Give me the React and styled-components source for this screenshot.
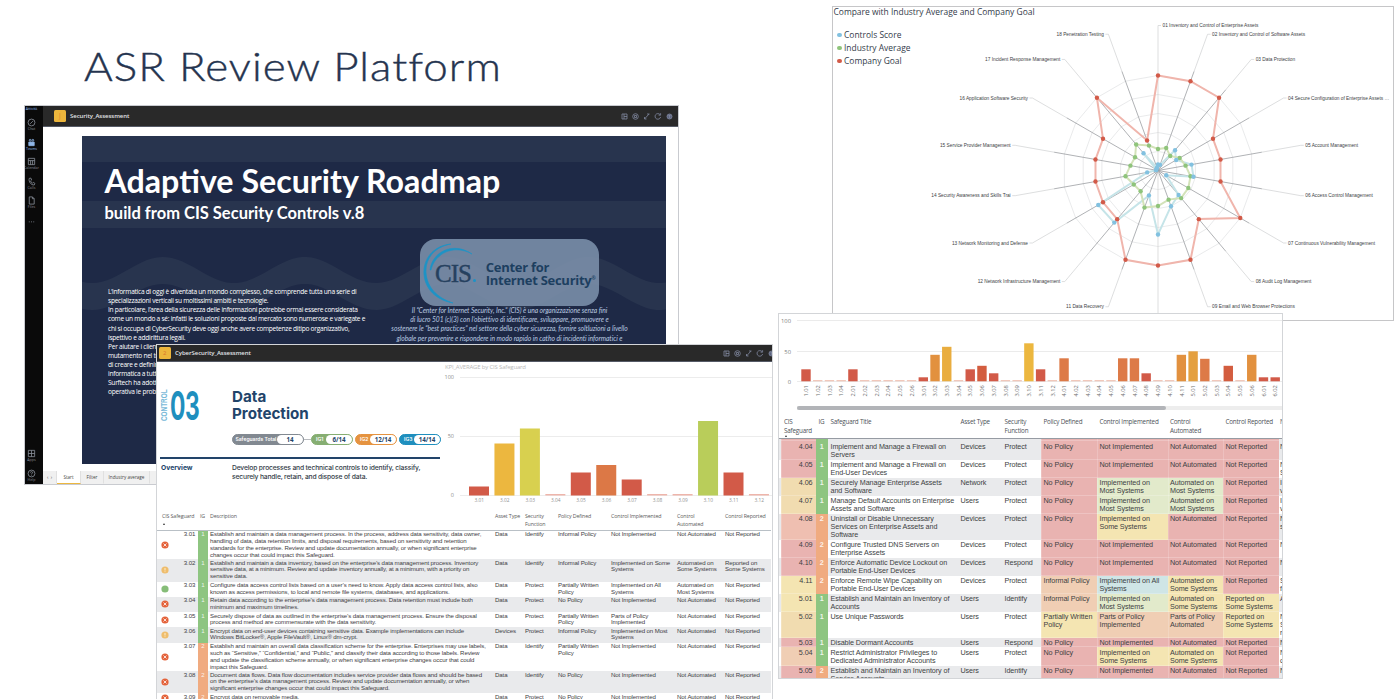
import React from "react";
import styled, { createGlobalStyle } from "styled-components";

const sans = `"Liberation Sans", Arial, sans-serif`;
const ui = `"Open Sans", "Noto Sans", sans-serif`;

const Global = createGlobalStyle`
  *, *::before, *::after { box-sizing: border-box; }
  body { margin: 0; background: #fff; overflow: hidden; }
`;

const Desktop = styled.main`
  position: relative;
  width: 1400px;
  height: 699px;
  overflow: hidden;
  background: #fff;
  font-family: ${sans};
`;

const PageTitle = styled.h1`
  display: inline-block;
  margin: 0;
  padding: 43px 0 0 84px;
  font: 300 39px/47px Lato, sans-serif;
  letter-spacing: 0.9px;
  color: #25344f;
  -webkit-text-stroke: 0.4px #25344f;
  white-space: nowrap;
  span {
    display: inline-block;
    transform: scaleX(1.127);
    transform-origin: left;
  }
`;

const Win = styled.section`
  position: absolute;
  left: ${(p) => p.$x}px;
  top: ${(p) => p.$y}px;
  width: ${(p) => p.$w}px;
  height: ${(p) => p.$h}px;
  overflow: hidden;
  background: #fff;
  border: 1px solid ${(p) => p.$edge || "#d3d5d8"};
`;

const TopBar = styled.header`
  display: flex;
  align-items: center;
  height: ${(p) => p.$h}px;
  padding-left: ${(p) => p.$left}px;
  background: #292929;
  border-bottom: 1px solid #555a66;
`;

const AppMark = styled.span`
  display: grid;
  place-items: center;
  width: 11.5px;
  height: 11.5px;
  border-radius: 1.5px;
  background: #edb63c;
  color: #d8752c;
  font: 6px/1 ${ui};
`;

const BarTitle = styled.span`
  margin-left: ${(p) => p.$ml}px;
  flex: 1;
  font: 600 6px/10px ${ui};
  letter-spacing: -0.06px;
  color: #e2e4e8;
`;

const Tools = styled.svg`
  width: 56px;
  height: 9px;
  margin-right: ${(p) => p.$mr}px;
  fill: none;
  stroke: #8088a0;
  stroke-width: 0.8;
`;

function BarTools({ mr }) {
  return (
    <Tools $mr={mr} viewBox="0 0 56 9">
      <path d="M3 2h5v5H3zM5 2v5M5 4.5h3" />
      <circle cx="16.500" cy="4.500" r="2.800" />
      <path d="M15.500 3.500h2v2h-2z" />
      <path d="M25.500 7l4.500-5M28 2h2.500M25.500 5v2h2" />
      <path d="M41 2.600A2.800 2.800 0 1 0 41.600 5M41.600 1.200v2h-2" />
      <circle cx="50.500" cy="4.500" r="2.500" fill="#5d6580" />
      <path d="M49.500 3.500h2M50.500 3v3" />
    </Tools>
  );
}

const Rich = ({ lines }) =>
  lines.map((l, i) => (
    <React.Fragment key={i}>
      {i > 0 && <br />}
      {l}
    </React.Fragment>
  ));

/* ---------- Security_Assessment window ---------- */

const Split = styled.div`
  display: flex;
  height: 100%;
`;
const Rail = styled.nav`
  display: flex;
  flex-direction: column;
  width: 18px;
  padding-top: 0.5px;
  background: #0a0a0a;
`;
const RailItem = styled.div`
  display: flex;
  flex: none;
  flex-direction: column;
  align-items: center;
  width: 13px;
  height: ${(p) => p.$h || 19.6}px;
  margin-top: ${(p) => p.$mt || 0}px;
  color: ${(p) => (p.$on ? "#8fb6e8" : "#8a8f99")};
  font: 3.6px/4px ${ui};
  svg {
    flex: none;
    width: 9px;
    height: 9px;
    fill: none;
    stroke: currentColor;
    stroke-width: 0.9;
  }
`;
const Main = styled.div`
  display: flex;
  flex-direction: column;
  flex: 1;
  min-width: 0;
`;
const Slide = styled.article`
  position: relative;
  isolation: isolate;
  flex: none;
  width: 584px;
  height: 328px;
  margin: 9px 0 0 39px;
  background: linear-gradient(#28344e 0 25.5px, #1e2946 25.5px 64.5px, #28344e 64.5px 91.5px, #1e2946 91.5px);
  color: #fff;
`;
const Waves = styled.svg`
  position: absolute;
  inset: 0;
  z-index: -1;
  width: 100%;
  height: 100%;
`;
const SlideHead = styled.div`
  padding: 25px 0 0 22.5px;
  white-space: nowrap;
  h2 {
    margin: 0;
    font: 700 32.2px/39px Lato, sans-serif;
  }
  h3 {
    margin: 0;
    font: 700 16.5px/26px Lato, sans-serif;
  }
`;
const SlideCols = styled.div`
  display: flex;
  justify-content: space-between;
  padding: 13px 37.5px 0 26px;
`;
const Intro = styled.p`
  width: 260px;
  margin: 48px 0 0;
  font: 6.6px/9.12px ${ui};
  letter-spacing: -0.265px;
  color: #fff;
  white-space: nowrap;
`;
const CisBlock = styled.div`
  display: flex;
  flex-direction: column;
  align-items: center;
  width: 238px;
`;
const CisCard = styled.div`
  display: flex;
  align-items: center;
  width: 179.5px;
  height: 67px;
  border-radius: 16px;
  background: rgba(125, 146, 172, 0.87);
  svg {
    flex: none;
    width: 60px;
    height: 67px;
  }
  strong {
    margin: 2px 0 0 6px;
    font: 700 13px/12.6px ${ui};
    letter-spacing: -0.27px;
    color: #1d3f60;
    white-space: nowrap;
  }
  sup {
    font-size: 5px;
    line-height: 0;
  }
`;
const CisNote = styled.p`
  margin: 0;
  font: italic 6.7px/9.2px Lato, sans-serif;
  letter-spacing: -0.03px;
  text-align: center;
  color: #bccbe2;
  white-space: nowrap;
`;
const SheetTabs = styled.footer`
  display: flex;
  margin-top: 7px;
  height: 13px;
  background: #f0f0f0;
  color: #444;
  font: 4.6px/13px ${ui};
`;
const SheetTab = styled.span`
  width: ${(p) => p.$w}px;
  text-align: center;
  border-right: 1px solid #e0e0e0;
  background: ${(p) => (p.$on ? "#fff" : "transparent")};
  border-bottom: 1px solid ${(p) => (p.$on ? "#ecb73f" : "transparent")};
`;

const sine = (mid, amp, x) => mid - amp * Math.cos(((x - 81) / 142) * 2 * Math.PI);
const xs = Array.from({ length: 118 }, (_, i) => Math.min(i * 5, 585));
const bandPath =
  "M" + xs.map((x) => `${x} ${sine(134, 13, x).toFixed(1)}`).join(" L") +
  " L" + [...xs].reverse().map((x) => `${x} ${sine(161, 13, x).toFixed(1)}`).join(" L") + " Z";

const introLines = [
  "L’informatica di oggi è diventata un mondo complesso, che comprende tutta una serie di",
  "specializzazioni verticali su moltissimi ambiti e tecnologie.",
  "In particolare, l’area della sicurezza delle informazioni potrebbe ormai essere considerata",
  "come un mondo a sé: infatti le soluzioni proposte dal mercato sono numerose e variegate e",
  "chi si occupa di CyberSecurity deve oggi anche avere competenze ditipo organizzativo,",
  "ispettivo e addirittura legali.",
  "Per aiutare i clienti ad orientarsi in un contesto in cui le scelte sono in continuo",
  "mutamento nel tempo",
  "di creare e definire",
  "informatica a tutto",
  "Surftech ha adottato",
  "operativa le problematiche",
];
const noteLines = [
  "Il “Center for Internet Security, Inc.” (CIS) è una organizzazione senza fini",
  "di lucro 501 (c)(3) con l’obiettivo di identificare, sviluppare, promuovere e",
  "sostenere le “best practices” nel settore della cyber sicurezza, fornire soltluzioni a livello",
  "globale per prevenire e rispondere in modo rapido in catho di incidenti informatici e",
];

function SecurityWindow() {
  return (
    <Win $x={24} $y={105} $w={655} $h={380} $edge="#c9cbd0">
      <Split>
        <Rail>
          <RailItem $on $h={11.5}>Attività</RailItem>
          <RailItem>
            <svg viewBox="0 0 10 10"><circle cx="5" cy="5" r="3.800" /><path d="M3.500 6.500l3-3" /></svg>Chat
          </RailItem>
          <RailItem $on>
            <svg viewBox="0 0 10 10"><path d="M2 4.500h6v4H2z" fill="currentColor" /><circle cx="3.500" cy="2.500" r="1" /><circle cx="6.500" cy="2.500" r="1" /></svg>Teams
          </RailItem>
          <RailItem>
            <svg viewBox="0 0 10 10"><path d="M1.500 1.500h7v7h-7zM1.500 4h7M4 4v4.500M6.200 4v4.500" /></svg>Calendar
          </RailItem>
          <RailItem>
            <svg viewBox="0 0 10 10"><path d="M2.500 1.500l1.800-.3.8 2.200-1.200 1c.4 1.200 1.200 2 2.200 2.500l1-1 1.700 1.300-.7 1.600C4.500 9.300 1.500 5 2.500 1.500z" /></svg>Calls
          </RailItem>
          <RailItem>
            <svg viewBox="0 0 10 10"><path d="M2.500 1h3.500l2 2v6h-5.500zM6 1v2h2" /></svg>Files
          </RailItem>
          <RailItem>
            <svg viewBox="0 0 10 10"><path d="M2 6.500h1M4.500 6.500h1M7 6.500h1" /></svg>
          </RailItem>
          <RailItem $mt={213.5}>
            <svg viewBox="0 0 10 10"><path d="M1.500 1.500h7v7h-7zM5 1.500v7M1.500 5h7" /></svg>Apps
          </RailItem>
          <RailItem>
            <svg viewBox="0 0 10 10"><circle cx="5" cy="5" r="3.800" /><path d="M3.800 4c0-1.600 2.600-1.400 2.400 0C6 5 5 4.800 5 6M5 7v.6" /></svg>Help
          </RailItem>
        </Rail>
        <Main>
          <TopBar $h={21} $left={11}>
            <AppMark>⌡</AppMark>
            <BarTitle $ml={4.5}>Security_Assessment</BarTitle>
            <BarTools mr={3} />
          </TopBar>
          <Slide>
            <Waves viewBox="0 0 584.5 328" preserveAspectRatio="none">
              <path d={bandPath} fill="#28344e" />
            </Waves>
            <SlideHead>
              <h2>Adaptive Security Roadmap</h2>
              <h3>build from CIS Security Controls v.8</h3>
            </SlideHead>
            <SlideCols>
              <Intro><Rich lines={introLines} /></Intro>
              <CisBlock>
                <CisCard>
                  <svg viewBox="0 0 60 67">
                    <path d="M31 5C12 7 3 21 4 35c1 15 12 26 29 29C17 59 7 48 6 34 5 20 14 8 31 5z" fill="#1c93c6" stroke="#1c93c6" strokeWidth=".7" />
                    <path d="M10 31C12 13 33 2 52 15 34 5 15 14 11 31z" fill="#1c93c6" stroke="#1c93c6" strokeWidth=".6" />
                    <text x="15" y="43" fontFamily="Liberation Serif" fontSize="25" textLength="37" fill="#26415f" stroke="#26415f" strokeWidth=".4">CIS</text>
                    <circle cx="54.500" cy="41.500" r="1.500" fill="#1c93c6" />
                  </svg>
                  <strong>Center for<br />Internet Security<sup>®</sup></strong>
                </CisCard>
                <CisNote><Rich lines={noteLines} /></CisNote>
              </CisBlock>
            </SlideCols>
          </Slide>
          <SheetTabs>
            <SheetTab $w={14}>‹ &nbsp;›</SheetTab>
            <SheetTab $w={24}  $on>Start</SheetTab>
            <SheetTab $w={23}>Filter</SheetTab>
            <SheetTab $w={46}>Industry average</SheetTab>
          </SheetTabs>
        </Main>
      </Split>
    </Win>
  );
}

/* ---------- charts ---------- */

const Plot = styled.svg`
  display: block;
  flex: none;
  overflow: hidden;
  font-family: ${ui};
`;

const R = "#d25a48";
const T = "#eeb5ab";

const kpi = [
  [9, R], [52, "#ecb73f"], [67, "#d8d04f"], [1.5, T], [23, R], [30.5, "#dc7846"],
  [16, R], [1.5, T], [1.5, T], [74.5, "#b9cd5a"], [23, R], [1.5, T],
];

function KpiChart() {
  return (
    <Plot width="331" height="146" viewBox="442 362 331 146">
      <text x="446" y="368.500" fontSize="6" textLength="81" fill="#b9b9b9">KPI_AVERAGE by CIS Safeguard</text>
      {[["100", 377], ["50", 436], ["0", 495]].map(([t, y]) => (
        <g key={t}>
          <text x="455" y={y + 2} fontSize="5.500" textAnchor="end" fill="#8c8c8c">{t}</text>
          <path d={`M461 ${y + 0.5}H773`} stroke="#ececec" />
        </g>
      ))}
      {kpi.map(([h, c], i) => (
        <g key={i}>
          <rect x={470 + i * 25.45} y={495.5 - h} width="20" height={h} fill={c} />
          <text x={480.3 + i * 25.45} y="502" fontSize="4.800" textAnchor="middle" fill="#909090">
            {"3." + String(i + 1).padStart(2, "0")}
          </text>
        </g>
      ))}
    </Plot>
  );
}

const groups = [[1, 4], [2, 6], [3, 12], [4, 11], [5, 6], [6, 2]];
const codes = groups.flatMap(([g, n]) => Array.from({ length: n }, (_, i) => `${g}.${String(i + 1).padStart(2, "0")}`));
const O = "#dd7a47";
const A = "#e2913f";
const Y = "#ecb73f";
const bars = {
  "1.01": [12, R], "2.01": [12, R], "3.01": [4, R], "3.02": [26.5, A], "3.03": [34.5, "#e9ad3f"],
  "3.05": [12, R], "3.06": [15.5, "#d35d3f"], "3.07": [8, R], "3.10": [38, Y], "3.11": [12, R],
  "4.01": [23, O], "4.06": [23, O], "4.07": [23, O], "4.08": [8, R], "4.11": [26.5, A],
  "5.01": [30, "#e4a03f"], "5.02": [22.5, O], "5.04": [15.5, "#d35d3f"], "5.06": [26.5, A],
  "6.01": [4, R], "6.02": [4, R],
};

function SafeguardChart() {
  return (
    <Plot width="504" height="98" viewBox="779 314 504 98">
      {[["100", 320], ["50", 351], ["0", 381]].map(([t, y]) => (
        <g key={t}>
          <text x="791" y={y + 2.5} fontSize="5.800" textAnchor="end" fill="#808080">{t}</text>
          <path d={`M797 ${y + 0.5}H1283`} stroke="#ebebeb" />
        </g>
      ))}
      {codes.map((code, i) => {
        const [h, c] = bars[code] || [1.2, "#f0c3b4"];
        const cx = 806 + i * 11.73;
        return (
          <g key={code}>
            <rect x={cx - 4.7} y={381.3 - h} width="9.400" height={h} fill={c} />
            <text transform={`translate(${cx + 2.2} 396.600) rotate(-90)`} fontSize="5.800" textLength="11.500" fill="#6e6e6e">{code}</text>
          </g>
        );
      })}
      <path d="M1282.500 355V381" stroke="#f3c6b4" />
      <rect x="797" y="406" width="486" height="4" fill="#ededed" />
      <rect x="797" y="406" width="369" height="4" rx="2" fill="#b2b4b8" />
    </Plot>
  );
}

/* ---------- CyberSecurity_Assessment window ---------- */

const ControlHead = styled.div`
  display: flex;
  justify-content: space-between;
  height: 146px;
`;
const ControlInfo = styled.div`
  display: flex;
  flex-direction: column;
  width: 284px;
  padding: 25.5px 0 0 3px;
`;
const ControlRow = styled.div`
  display: flex;
  height: 69px;
`;
const ControlTag = styled.span`
  width: 8px;
  height: 33px;
  writing-mode: vertical-rl;
  transform: rotate(180deg) scaleX(1.35);
  font: 700 6.4px/8px ${sans};
  color: #78b9d8;
  white-space: nowrap;
`;
const ControlNo = styled.span`
  width: 65px;
  height: 35px;
  font: 700 40px/35px Inter, sans-serif;
  color: #1f8fbe;
  span {
    display: inline-block;
    transform: scaleX(0.57);
    transform-origin: left;
    margin-left: 1.5px;
    letter-spacing: -0.5px;
  }
`;
const ControlTitle = styled.div`
  display: flex;
  flex-direction: column;
  color: #22446a;
  h2 {
    margin: 0;
    font: 700 15.2px/17px Inter, sans-serif;
  }
`;
const Pills = styled.div`
  display: flex;
  gap: 2px;
  margin-top: 12px;
`;
const Pill = styled.span`
  display: flex;
  align-items: center;
  width: ${(p) => p.$w}px;
  height: 11px;
  padding-left: ${(p) => p.$pad || 4}px;
  border: 1px solid ${(p) => p.$c};
  border-radius: 6px;
  background: ${(p) => p.$c};
  color: #fff;
  font: 600 5px/9px Inter, sans-serif;
  white-space: nowrap;
  b {
    width: 26px;
    margin-left: auto;
    border-radius: 5px;
    background: #fff;
    color: #22446a;
    font: 700 6.2px/9px ${ui};
    text-align: center;
  }
`;
const Dash = styled.i`
  align-self: center;
  width: 7px;
  height: 1px;
  margin: 0 -2px;
  background: #b9bcc0;
`;
const Overview = styled.div`
  display: flex;
  width: 280px;
  padding-top: 4px;
  border-top: 2px solid #22446a;
  color: #333c48;
  font: 500 6.75px/9px Inter, sans-serif;
  white-space: nowrap;
  b {
    width: 72px;
    padding-left: 1px;
    font-weight: 700;
    color: #22446a;
  }
  span {
    letter-spacing: -0.17px;
  }
`;

const cyberCols = "39px 10px 287px 30px 33px 53px 66px 48px 1fr";
const CyberHeader = styled.div`
  display: grid;
  grid-template-columns: ${cyberCols};
  height: 22.5px;
  margin-right: 1px;
  padding: 5px 0 0 2px;
  border-bottom: 1px solid #b9c0c6;
  font: 5.3px/7.5px ${ui};
  letter-spacing: -0.13px;
  color: #5b5b5b;
  white-space: nowrap;
`;
const HCell = styled.span`
  padding-left: ${(p) => p.$pl || 0}px;
`;
const SortMark = styled.i`
  display: block;
  width: 0;
  margin: ${(p) => p.$mt}px 0 0 1px;
  border: 1.5px solid transparent;
  border-top: 0;
  border-bottom: 2px solid #333;
`;
const CyberRow = styled.div`
  display: grid;
  grid-template-columns: ${cyberCols};
  height: ${(p) => p.$h}px;
  margin-right: 1px;
  padding-left: 2px;
  background: ${(p) => (p.$alt ? "#e9eaec" : "#fff")};
  font: 6.1px/6.9px ${sans};
  letter-spacing: -0.115px;
  color: #3f4145;
  white-space: nowrap;
`;
const Cell = styled.span`
  padding: 0.5px 0 0 ${(p) => p.$pl || 0}px;
`;
const StatusCell = styled.span`
  display: flex;
  align-items: center;
  justify-content: space-between;
  padding-right: 2.5px;
  b {
    align-self: flex-start;
    padding-top: 0.5px;
    font-weight: 400;
    letter-spacing: 0;
  }
  svg {
    width: 8px;
    height: 8px;
    margin-left: 2px;
  }
`;
const Level = styled.span`
  padding-top: 0.5px;
  text-align: center;
  background: ${(p) => (p.$n === 1 ? "#8ec581" : "#f0ab80")};
  color: rgba(255, 255, 255, 0.85);
`;

const statusColor = { bad: "#e4623a", warn: "#efbd6c", ok: "#86bd78" };
const Status = ({ kind }) => (
  <svg viewBox="0 0 8 8">
    <circle cx="4" cy="4" r="3.600" fill={statusColor[kind]} />
    {kind === "bad" && <path d="M2.500 2.500l3 3M5.500 2.500l-3 3" stroke="#fff" strokeWidth=".8" />}
    {kind === "warn" && <path d="M4 2v2.500M4 5.400v.7" stroke="#fff5dc" strokeWidth=".9" />}
  </svg>
);

const NR = ["Not Reported"], NA = ["Not Automated"], NI = ["Not Implemented"];
const cyberRows = [
  [28.5, "3.01", "bad", 1, ["Establish and maintain a data management process. In the process, address data sensitivity, data owner,", "handling of data, data retention limits, and disposal requirements, based on sensitivity and retention", "standards for the enterprise. Review and update documentation annually, or when significant enterprise", "changes occur that could impact this Safeguard."], ["Data"], ["Identify"], ["Informal Policy"], NI, NA, NR],
  [22.5, "3.02", "warn", 1, ["Establish and maintain a data inventory, based on the enterprise’s data management process. Inventory", "sensitive data, at a minimum. Review and update inventory annually, at a minimum, with a priority on", "sensitive data."], ["Data"], ["Identify"], ["Informal Policy"], ["Implemented on Some", "Systems"], ["Automated on", "Some Systems"], ["Reported on", "Some Systems"]],
  [15, "3.03", "ok", 1, ["Configure data access control lists based on a user’s need to know. Apply data access control lists, also", "known as access permissions, to local and remote file systems, databases, and applications."], ["Data"], ["Protect"], ["Partially Written", "Policy"], ["Implemented on All", "Systems"], ["Automated on", "Most Systems"], NR],
  [15.5, "3.04", "bad", 1, ["Retain data according to the enterprise’s data management process. Data retention must include both", "minimum and maximum timelines."], ["Data"], ["Protect"], ["No Policy"], NI, NA, NR],
  [15, "3.05", "bad", 1, ["Securely dispose of data as outlined in the enterprise’s data management process. Ensure the disposal", "process and method are commensurate with the data sensitivity."], ["Data"], ["Protect"], ["Partially Written", "Policy"], ["Parts of Policy", "Implemented"], NA, NR],
  [15.5, "3.06", "warn", 1, ["Encrypt data on end-user devices containing sensitive data. Example implementations can include", "Windows BitLocker®, Apple FileVault®, Linux® dm-crypt."], ["Devices"], ["Protect"], ["Informal Policy"], ["Implemented on Most", "Systems"], NA, NR],
  [28.5, "3.07", "bad", 2, ["Establish and maintain an overall data classification scheme for the enterprise. Enterprises may use labels,", "such as “Sensitive,” “Confidential,” and “Public,” and classify their data according to those labels. Review", "and update the classification scheme annually, or when significant enterprise changes occur that could", "impact this Safeguard."], ["Data"], ["Identify"], ["Partially Written", "Policy"], NI, NA, NR],
  [22, "3.08", "bad", 2, ["Document data flows. Data flow documentation includes service provider data flows and should be based", "on the enterprise’s data management process. Review and update documentation annually, or when", "significant enterprise changes occur that could impact this Safeguard."], ["Data"], ["Identify"], ["No Policy"], NI, NA, NR],
  [9, "3.09", "bad", 2, ["Encrypt data on removable media."], ["Data"], ["Protect"], ["No Policy"], NI, NA, NR],
];

function CyberWindow() {
  return (
    <Win $x={156} $y={344} $w={617} $h={362}>
      <TopBar $h={17} $left={2}>
        <AppMark>2</AppMark>
        <BarTitle $ml={4.5}>CyberSecurity_Assessment</BarTitle>
        <BarTools mr={-5} />
      </TopBar>
      <ControlHead>
        <ControlInfo>
          <ControlRow>
            <ControlTag>CONTROL</ControlTag>
            <ControlNo><span>03</span></ControlNo>
            <ControlTitle>
              <h2>Data<br />Protection</h2>
              <Pills>
                <Pill $w={72} $c="#828991" $pad={2.5}>Safeguards Total<b>14</b></Pill>
                <Dash />
                <Pill $w={42} $c="#86ae72">IG1<b>6/14</b></Pill>
                <Pill $w={42} $c="#e59340">IG2<b>12/14</b></Pill>
                <Pill $w={42} $c="#1f8fbe">IG3<b>14/14</b></Pill>
              </Pills>
            </ControlTitle>
          </ControlRow>
          <Overview>
            <b>Overview</b>
            <span>Develop processes and technical controls to identify, classify,<br />securely handle, retain, and dispose of data.</span>
          </Overview>
        </ControlInfo>
        <KpiChart />
      </ControlHead>
      <CyberHeader>
        <HCell $pl={3}>CIS Safeguard<SortMark $mt={2.5} /></HCell>
        <HCell $pl={2}>IG</HCell>
        <HCell $pl={2}>Description</HCell>
        <HCell>Asset Type</HCell>
        <HCell>Security<br />Function</HCell>
        <HCell>Policy Defined</HCell>
        <HCell>Control Implemented</HCell>
        <HCell>Control<br />Automated</HCell>
        <HCell>Control Reported</HCell>
      </CyberHeader>
      {cyberRows.map(([h, id, st, lv, ...cells], i) => (
        <CyberRow key={id} $h={h} $alt={i % 2 === 1}>
          <StatusCell><Status kind={st} /><b>{id}</b></StatusCell>
          <Level $n={lv}>{lv}</Level>
          {cells.map((c, j) => (
            <Cell key={j} $pl={j === 0 ? 2 : 0}><Rich lines={c} /></Cell>
          ))}
        </CyberRow>
      ))}
    </Win>
  );
}

/* ---------- radar window ---------- */

const RadarTitle = styled.h2`
  margin: 0;
  padding-left: 0.5px;
  font: 400 8.45px/10px ${ui};
  color: #333b4a;
`;
const RadarBody = styled.div`
  display: flex;
  height: 303px;
`;
const Legend = styled.ul`
  flex: none;
  width: 90px;
  margin: 0;
  padding: 11px 0 0 4px;
  list-style: none;
  font: 8.45px/13px ${ui};
  color: #333b4a;
`;
const LegendItem = styled.li`
  display: flex;
  align-items: center;
  gap: 2.5px;
  white-space: nowrap;
  &::before {
    content: "";
    width: 4.5px;
    height: 4.5px;
    margin-top: 1px;
    border-radius: 50%;
    background: ${(p) => p.$c};
  }
`;

const axes = [
  "01 Inventory and Control of Enterprise Assets", "02 Inventory and Control of Software Assets", "03 Data Protection",
  "04 Secure Configuration of Enterprise Assets …", "05 Account Management", "06 Access Control Management",
  "07 Continuous Vulnerability Management", "08 Audit Log Management", "09 Email and Web Browser Protections", "",
  "11 Data Recovery", "12 Network Infrastructure Management", "13 Network Monitoring and Defense",
  "14 Security Awareness and Skills Trai", "15 Service Provider Management", "16 Application Software Security",
  "17 Incident Response Management", "18 Penetration Testing",
];
const series = [
  { line: "#c5e4e8", dot: "#82c1e0", r: [6, 6, 26.5, 21, 34, 36, 9.5, 32, 38, 64, 26.5, 68, 69, 11, 2, 2, 22.5, 3] },
  { line: "#d3e2b9", dot: "#8fc47b", r: [21.5, 24, 19, 25, 28, 33, 35, 36, 31, 35.5, 39.5, 27, 28, 33, 28, 26.5, 34, 26.5] },
  { line: "#f0b5ac", dot: "#d25a48", r: [95, 95, 95, 63.5, 63.5, 63.5, 95, 63.5, 95, 95, 95, 63.5, 63.5, 63.5, 63.5, 63.5, 95, 32] },
];
const CX = 1158, CY = 170.5;
const pt = (r, i) => [CX + r * Math.sin((i * Math.PI) / 9), CY - r * Math.cos((i * Math.PI) / 9)];
const ring = (rs) => rs.map((r, i) => pt(r, i).map((v) => v.toFixed(1)).join(",")).join(" ");

function Radar() {
  return (
    <Plot width="470" height="303" viewBox="923 17 470 303">
      {[19, 38, 57, 76, 95].map((r) => (
        <polygon key={r} points={ring(Array(18).fill(r))} fill="none" stroke="#e3e4e6" strokeWidth=".8" />
      ))}
      {axes.map((label, i) => {
        const [x, y] = pt(105.5, i);
        const [lx, ly] = pt(145, i);
        const dir = i < 9 ? 1 : -1;
        return (
          <g key={i}>
            <path d={`M${CX} ${CY}L${x} ${y}`} stroke={i % 9 === 0 ? "#d0d0d0" : "#8e9095"} strokeWidth=".7" />
            <path d={`M${x} ${y}L${lx} ${ly}${label ? `h${dir * 3}` : ""}`} fill="none" stroke="#d4d5d7" strokeWidth=".8" />
            <text x={lx + dir * 4.5} y={ly + 1.6} fontSize="4.770" fontFamily="Liberation Sans" textAnchor={dir > 0 ? "start" : "end"} fill="#3c3e44">{label}</text>
          </g>
        );
      })}
      {series.map((s) => (
        <polygon key={s.dot} points={ring(s.r)} fill="none" stroke={s.line} strokeWidth="2" />
      ))}
      {[1, 0, 2].map((k) =>
        series[k].r.map((r, i) => {
          const [x, y] = pt(r, i);
          return <circle key={`${k}-${i}`} cx={x} cy={y} r="2.200" fill={series[k].dot} />;
        })
      )}
    </Plot>
  );
}

function RadarWindow() {
  return (
    <Win $x={832} $y={6} $w={562} $h={315} $edge="#c6c6c8">
      <RadarTitle>Compare with Industry Average and Company Goal</RadarTitle>
      <RadarBody>
        <Legend>
          <LegendItem $c="#82c1e0">Controls Score</LegendItem>
          <LegendItem $c="#8fc47b">Industry Average</LegendItem>
          <LegendItem $c="#d25a48">Company Goal</LegendItem>
        </Legend>
        <Radar />
      </RadarBody>
    </Win>
  );
}

/* ---------- safeguard status window ---------- */

const sgCols = "34.5px 12.5px 130px 44px 39px 56px 70.5px 55.5px 56px 1fr";
const SgHeader = styled.div`
  display: grid;
  grid-template-columns: ${sgCols};
  height: 27px;
  padding: 5px 0 0 2px;
  border-bottom: 1.5px solid #969ba3;
  font: 6.3px/9px ${ui};
  letter-spacing: -0.2px;
  color: #4d5258;
  white-space: nowrap;
  overflow: hidden;
`;
const SgRow = styled.div`
  display: grid;
  grid-template-columns: ${sgCols};
  height: ${(p) => p.$h}px;
  padding-left: 2px;
  background: ${(p) => (p.$alt ? "#e9eaec" : "#fff")};
  font: 7.2px/8.1px ${sans};
  letter-spacing: -0.08px;
  color: #3d3f43;
  white-space: nowrap;
`;
const tint = {
  p: "#e9b3b1", y: "#f4e5b2", g: "#e2eacb", b: "#cfe5e6", o: "#f0ceb4", s: "#f1dcb0", r: "#efbfb1",
};
const SgCell = styled.span`
  overflow: hidden;
  padding: 1.5px ${(p) => (p.$num ? 3 : 0)}px 0 ${(p) => (p.$num ? 0 : p.$pl ?? 2.5)}px;
  text-align: ${(p) => (p.$num ? "right" : "left")};
  background: ${(p) => tint[p.$t] || "transparent"};
  box-shadow: ${(p) => (p.$t ? "inset 0 -1px rgba(255,255,255,.22), inset 1px 0 rgba(255,255,255,.18)" : "none")};
`;
const SgLevel = styled(Level)`
  padding-top: 1.5px;
  font-weight: 700;
`;

const P = ["p", "No Policy"], IP = ["o", "Informal Policy"], N1 = ["p", "Not Implemented"], N2 = ["p", "Not Automated"], N3 = ["p", "Not Reported"];
const IM = ["g", "Implemented on", "Most Systems"], IS = ["y", "Implemented on", "Some Systems"];
const AM = ["g", "Automated on", "Most Systems"], AS = ["y", "Automated on", "Some Systems"], RS = ["y", "Reported on", "Some Systems"];
const sgRows = [
  [18.5, "p", "4.04", 1, ["Implement and Manage a Firewall on", "Servers"], "Devices", "Protect", P, N1, N2, N3, ["N"]],
  [18, "p", "4.05", 1, ["Implement and Manage a Firewall on", "End-User Devices"], "Devices", "Protect", P, N1, N2, N3, ["N", "S"]],
  [18, "s", "4.06", 1, ["Securely Manage Enterprise Assets", "and Software"], "Network", "Protect", P, IM, AM, N3, ["I", "v"]],
  [18, "s", "4.07", 1, ["Manage Default Accounts on Enterprise", "Assets and Software"], "Users", "Protect", P, IM, AM, N3, ["I", "v"]],
  [26, "r", "4.08", 2, ["Uninstall or Disable Unnecessary", "Services on Enterprise Assets and", "Software"], "Devices", "Protect", P, IS, N2, N3, ["N", "s"]],
  [18, "p", "4.09", 2, ["Configure Trusted DNS Servers on", "Enterprise Assets"], "Devices", "Protect", P, N1, N2, N3, ["N"]],
  [18, "p", "4.10", 2, ["Enforce Automatic Device Lockout on", "Portable End-User Devices"], "Devices", "Respond", P, N1, N2, N3, ["N"]],
  [18, "y", "4.11", 2, ["Enforce Remote Wipe Capability on", "Portable End-User Devices"], "Devices", "Protect", IP, ["b", "Implemented on All", "Systems"], AS, N3, ["S", "f"]],
  [18, "y", "5.01", 1, ["Establish and Maintain an Inventory of", "Accounts"], "Users", "Identify", IP, IM, AS, RS, ["A"]],
  [26, "s", "5.02", 1, ["Use Unique Passwords"], "Users", "Protect", ["y", "Partially Written", "Policy"], ["o", "Parts of Policy", "Implemented"], ["o", "Parts of Policy", "Automated"], RS, ["N", "S", "r"]],
  [9.5, "p", "5.03", 1, ["Disable Dormant Accounts"], "Users", "Respond", P, N1, N2, N3, ["N"]],
  [18.5, "o", "5.04", 1, ["Restrict Administrator Privileges to", "Dedicated Administrator Accounts"], "Users", "Protect", P, IS, AS, N3, ["N", "c"]],
  [18, "p", "5.05", 2, ["Establish and Maintain an Inventory of", "Service Accounts"], "Users", "Identify", P, N1, N2, N3, ["N"]],
];

function SafeguardWindow() {
  return (
    <Win $x={778} $y={313} $w={505} $h={366}>
      <SafeguardChart />
      <SgHeader>
        <HCell $pl={3}>CIS<br />Safeguard<SortMark $mt={0} /></HCell>
        <HCell $pl={3}>IG</HCell>
        <HCell $pl={2.5}>Safeguard Title</HCell>
        <HCell $pl={2.5}>Asset Type</HCell>
        <HCell $pl={2.5}>Security<br />Function</HCell>
        <HCell $pl={2.5}>Policy Defined</HCell>
        <HCell $pl={2.5}>Control Implemented</HCell>
        <HCell $pl={2.5}>Control<br />Automated</HCell>
        <HCell $pl={2.5}>Control Reported</HCell>
        <HCell $pl={1}>N</HCell>
      </SgHeader>
      <SgRow $h={2} $alt>
        <SgCell $t="p" /><SgLevel $n={1} /><SgCell /><SgCell /><SgCell /><SgCell $t="p" /><SgCell $t="p" /><SgCell $t="p" /><SgCell $t="p" /><SgCell />
      </SgRow>
      {sgRows.map(([h, t, id, lv, title, type, fn, ...rest], i) => (
        <SgRow key={id} $h={h} $alt={i % 2 === 0}>
          <SgCell $num $t={t}>{id}</SgCell>
          <SgLevel $n={lv}>{lv}</SgLevel>
          <SgCell><Rich lines={title} /></SgCell>
          <SgCell>{type}</SgCell>
          <SgCell>{fn}</SgCell>
          {rest.slice(0, 4).map(([tone, ...lines], j) => (
            <SgCell key={j} $t={tone}><Rich lines={lines} /></SgCell>
          ))}
          <SgCell $pl={1}><Rich lines={rest[4]} /></SgCell>
        </SgRow>
      ))}
    </Win>
  );
}

export default function App() {
  return (
    <Desktop>
      <Global />
      <PageTitle><span>ASR Review Platform</span></PageTitle>
      <SecurityWindow />
      <CyberWindow />
      <RadarWindow />
      <SafeguardWindow />
    </Desktop>
  );
}
